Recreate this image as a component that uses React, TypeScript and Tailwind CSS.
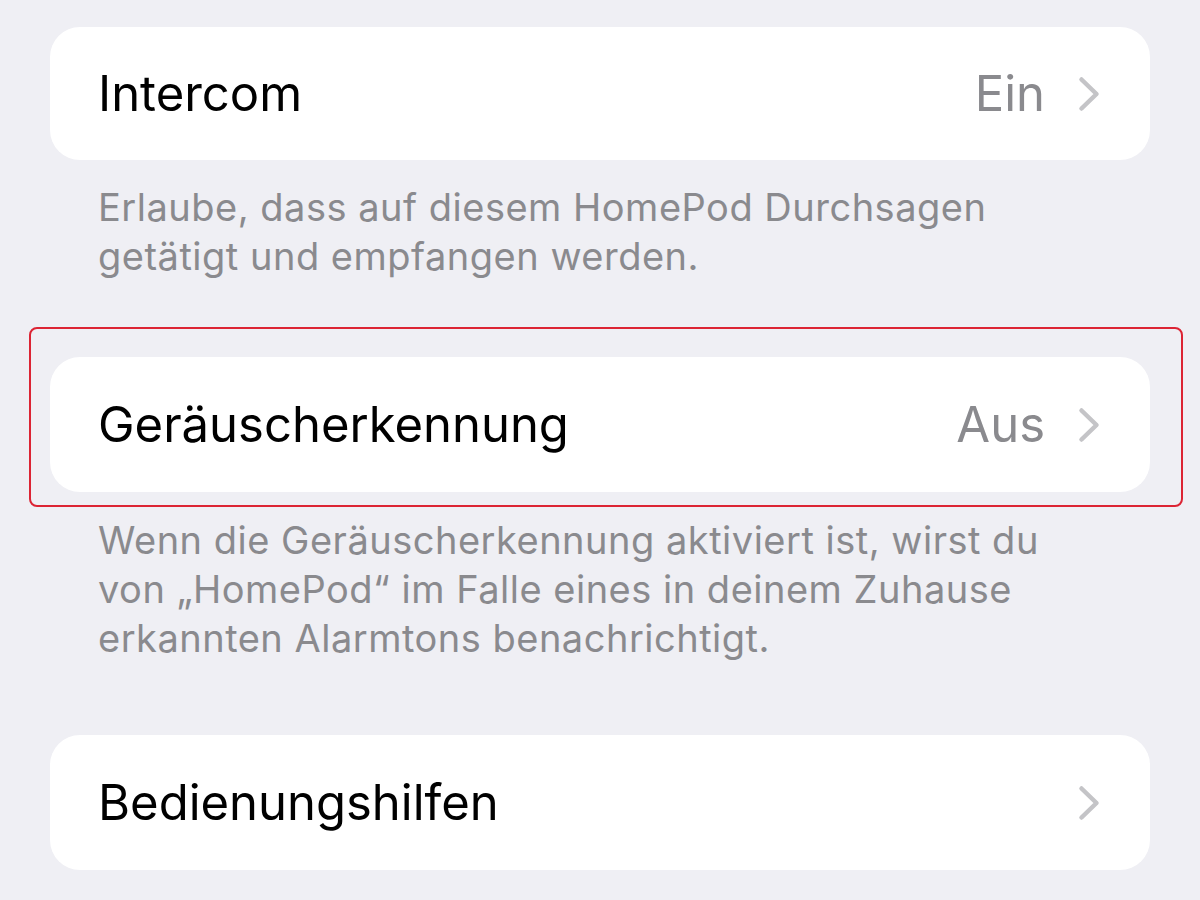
const font = { fontFamily: "Inter, 'Noto Sans', sans-serif" };

function Chevron() {
  return (
    <svg width="22" height="36" viewBox="0 0 22 36" fill="none" className="shrink-0">
      <path d="M3.5 3.5 L18.5 18 L3.5 32.5" stroke="#c4c4c7" strokeWidth="4.5" strokeLinecap="round" strokeLinejoin="round" />
    </svg>
  );
}

function Row({ label, value, h = "h-[135px]" }: { label: string; value?: string; h?: string }) {
  return (
    <div className={`${h} bg-white rounded-[30px] flex items-center pl-[48px] pr-[50px]`}>
      <span className="flex-1 text-[49px] text-black">{label}</span>
      {value && <span className="text-[49px] text-[#8a8a8e] mr-[33px]">{value}</span>}
      <Chevron />
    </div>
  );
}

function Note({ children }: { children: React.ReactNode }) {
  return <p className="px-[48px] text-[38px] leading-[49px] tracking-[0.5px] text-[#8a8a8e]">{children}</p>;
}

export default function App() {
  return (
    <div className="w-[1200px] h-[900px] overflow-hidden bg-[#efeff4] px-[50px] pt-[27px]" style={font}>
      <Row label="Intercom" value="Ein" h="h-[133px]" />
      <div className="mt-[23px]">
        <Note>
          Erlaube, dass auf diesem HomePod Durchsagen
          <br />
          getätigt und empfangen werden.
        </Note>
      </div>

      <div className="relative mt-[76px]">
        <Row label="Geräuscherkennung" value="Aus" />
        <div className="absolute -top-[30px] -left-[21px] -right-[33px] -bottom-[15px] border-2 border-[#dc2434] rounded-[8px] pointer-events-none" />
      </div>
      <div className="mt-[24px]">
        <Note>
          Wenn die Geräuscherkennung aktiviert ist, wirst du
          <br />
          von „HomePod“ im Falle eines in deinem Zuhause
          <br />
          erkannten Alarmtons benachrichtigt.
        </Note>
      </div>

      <div className="mt-[72px]">
        <Row label="Bedienungshilfen" />
      </div>
    </div>
  );
}
